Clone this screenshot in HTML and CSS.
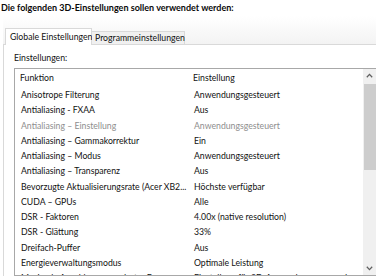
FILE: index.html
```html
<!DOCTYPE html>
<html lang="de">
<head>
<meta charset="utf-8">
<link rel="stylesheet" href="styles.css">
</head>
<body>
<div class="page">
  <div class="title">Die folgenden 3D-Einstellungen sollen verwendet werden:</div>
  <div class="tabs">
    <div class="tab active">Globale Einstellungen</div>
    <div class="tab">Programmeinstellungen</div>
  </div>
  <div class="panel">
    <div class="label">Einstellungen:</div>
    <div class="listbox">
      <div class="list">
        <div class="row head"><span>Funktion</span><span>Einstellung</span></div>
        <div class="row"><span>Anisotrope Filterung</span><span>Anwendungsgesteuert</span></div>
        <div class="row"><span>Antialiasing - FXAA</span><span>Aus</span></div>
        <div class="row disabled"><span>Antialiasing – Einstellung</span><span>Anwendungsgesteuert</span></div>
        <div class="row"><span>Antialiasing – Gammakorrektur</span><span>Ein</span></div>
        <div class="row"><span>Antialiasing – Modus</span><span>Anwendungsgesteuert</span></div>
        <div class="row"><span>Antialiasing – Transparenz</span><span>Aus</span></div>
        <div class="row"><span>Bevorzugte Aktualisierungsrate (Acer XB2...</span><span>Höchste verfügbar</span></div>
        <div class="row"><span>CUDA – GPUs</span><span>Alle</span></div>
        <div class="row"><span>DSR - Faktoren</span><span>4.00x (native resolution)</span></div>
        <div class="row"><span>DSR - Glättung</span><span>33%</span></div>
        <div class="row"><span>Dreifach-Puffer</span><span>Aus</span></div>
        <div class="row"><span>Energieverwaltungsmodus</span><span>Optimale Leistung</span></div>
        <div class="row"><span>Maximale Anzahl vorgerenderter Frames</span><span>Einstellung für 3D-Anwendung verwenden</span></div>
      </div>
      <div class="scrollbar">
        <div class="sb-btn">
          <svg width="7" height="5" viewBox="0 0 7 5"><path d="M0.8 4.2 L3.5 1.4 L6.2 4.2" fill="none" stroke="#606060" stroke-width="1.3"/></svg>
        </div>
        <div class="sb-track"><div class="sb-thumb"></div></div>
        <div class="sb-btn">
          <svg width="7" height="5" viewBox="0 0 7 5"><path d="M0.8 0.8 L3.5 3.6 L6.2 0.8" fill="none" stroke="#606060" stroke-width="1.3"/></svg>
        </div>
      </div>
    </div>
  </div>
</div>
</body>
</html>
```
FILE: styles.css
```css
html, body {
  margin: 0;
  padding: 0;
  background: #ffffff;
}
.page {
  width: 376px;
  height: 280px;
  overflow: hidden;
  font-family: Lato, "Liberation Sans", sans-serif;
  font-size: 8.7px;
  color: #111111;
}
.title {
  height: 16px;
  line-height: 16px;
  padding-left: 1px;
  font-weight: bold;
  font-size: 9px;
  color: #0a0a0a;
  white-space: nowrap;
}
.tabs {
  display: flex;
  align-items: flex-end;
  height: 28px;
  margin-left: 3px;
  padding-left: 2px;
  border-bottom: 1px solid #d9d9d9;
  background: linear-gradient(#ffffff, #f3f3f3);
}
.tab {
  box-sizing: border-box;
  height: 13px;
  line-height: 12px;
  width: 93px;
  padding-left: 3px;
  border: 1px solid #d9d9d9;
  border-left: none;
  border-bottom: none;
  background: #f0f0f0;
  white-space: nowrap;
}
.tab.active {
  height: 17px;
  line-height: 16px;
  width: 87px;
  padding-left: 4px;
  margin-bottom: -1px;
  border-left: 1px solid #d9d9d9;
  background: #ffffff;
}
.panel {
  margin-left: 3px;
  border-left: 1px solid #d9d9d9;
  padding: 6px 0 0 10px;
  background: #ffffff;
}
.label {
  height: 14px;
  line-height: 14px;
  margin-bottom: 3px;
}
.listbox {
  display: flex;
  width: 363px;
  height: 208px;
  box-sizing: border-box;
  border: 1px solid #a8a8a8;
  background: #ffffff;
}
.list {
  width: 348px;
  overflow: hidden;
}
.row {
  display: grid;
  grid-template-columns: 173px 1fr;
  height: 15.27px;
  line-height: 15.27px;
  white-space: nowrap;
}
.row span {
  padding-left: 6px;
  overflow: hidden;
}
.row.head {
  height: 18px;
  line-height: 18px;
}
.row.head span:first-child {
  padding-left: 5px;
}
.row.head span:last-child {
  padding-left: 5px;
}
.row.disabled {
  color: #8e8e8e;
}
.scrollbar {
  width: 13px;
  display: flex;
  flex-direction: column;
  background: #f0f0f0;
}
.sb-btn {
  height: 13px;
  display: flex;
  align-items: center;
  justify-content: center;
  padding-right: 1px;
}
.sb-track {
  flex: 1;
  padding-top: 2px;
}
.sb-thumb {
  margin-left: 1px;
  width: 12px;
  height: 86px;
  background: #cdcdcd;
}
```
